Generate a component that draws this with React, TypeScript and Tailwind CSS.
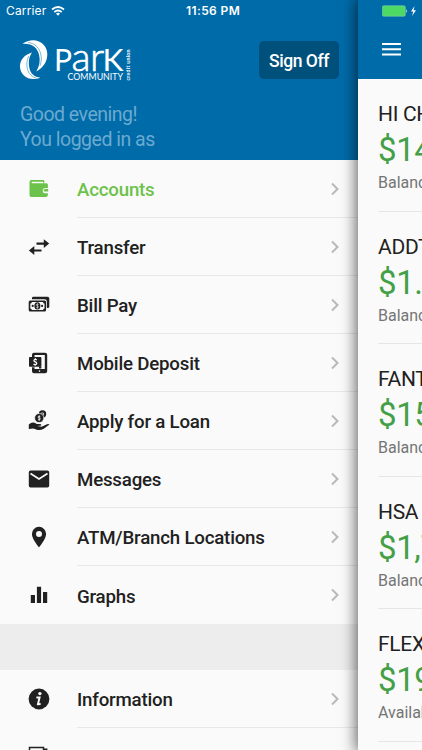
import type { ReactNode } from "react";

interface MenuItem {
  label: string;
  icon: ReactNode;
  active?: boolean;
}

interface Account {
  name: string;
  amount: string;
  caption: string;
}

const WalletIcon = () => (
  <svg width="20" height="20" viewBox="0 0 20 20" fill="currentColor">
    <path d="M2.500 1h12a.8.8 0 0 1 .8.8V3.800h-1.300V2.700H3.500q-1 0-1 .7t1 .8h13.800q1.600 0 1.600 1.500v3.300h-2.500a2.500 2.500 0 0 0 0 5.300h2.500v1.800q0 1.800-1.800 1.800H2.300Q.5 17.900.5 16V3q0-2 2-2z" />
    <path d="M16 10h3.200v2.500H16a1.200 1.200 0 0 1 0-2.500z" />
  </svg>
);

const TransferIcon = () => (
  <svg width="22" height="20" viewBox="0 0 22 20" fill="currentColor">
    <path d="M8.500 5.600h7.300V2.200l5.400 4.400-5.400 4.400V7.800H8.500zM13.500 12.400H6.300V9.100L.9 13.500l5.400 4.400v-3.300h7.200z" />
  </svg>
);

const BillIcon = () => (
  <svg width="22" height="20" viewBox="0 0 22 20" fill="currentColor">
    <path d="M5 1.700h14.500q1.800 0 1.800 1.800v7.900q0 1.600-1.600 1.600h-.8V6.400q0-2.200-2.500-2.200H4q-.6-2.500 1-2.500z" />
    <path
      fillRule="evenodd"
      d="M2.200 5.400h14.400q1.500 0 1.500 1.500v8.100q0 1.500-1.500 1.500H2.200Q.7 16.500.7 15V6.900q0-1.500 1.500-1.500zm1.600 1.500q0 1.500-1.500 1.500v5.100q1.500 0 1.500 1.500H15q0-1.500 1.500-1.500V8.400Q15 8.400 15 6.900z"
    />
    <ellipse cx="9.400" cy="10.950" rx="3" ry="3.600" />
    <circle cx="4.700" cy="10.950" r="1.100" />
    <circle cx="14.100" cy="10.950" r="1.100" />
    <path d="M10.500 9.500Q9.400 8.800 8.600 9.500t.8 1.400 .8 1.500-1.900.1M9.400 8.300v5.300" stroke="#fafafa" strokeWidth=".6" fill="none" />
  </svg>
);

const MobileIcon = () => (
  <svg width="22" height="22" viewBox="0 0 22 22" fill="currentColor">
    <path
      fillRule="evenodd"
      d="M6 .7h11q2.200 0 2.200 2v16.500q0 2-2.200 2H6q-2 0-2-2v-4h2.500v1.800h10.300V3H6.500v2H4V2.700q0-2 2-2zM11.500 18.300a.8.8 0 1 0 0 1.600.8.8 0 0 0 0-1.600z"
    />
    <rect x="1" y="5" width="12.400" height="9.800" rx=".8" />
    <path d="M11 14.500h2.400v2H11z" />
    <path d="M8.900 7.900Q7.200 6.700 6.200 7.800t1.100 2.100 1.200 2.100-3 .1" stroke="#fafafa" strokeWidth="1.200" fill="none" />
    <path d="M7.300 6v1.200M7.300 12.400v1.300" stroke="#fafafa" strokeWidth="1" />
  </svg>
);

const LoanIcon = () => (
  <svg width="22" height="22" viewBox="0 0 22 22" fill="currentColor">
    <path d="M.8 14.400q2.800-2.600 5.800-1.700l2.300 1.300h3.300q1.500.2 1.100 1.500l-3.900.6 4.100.6 5.500-2.500q1.800-.5 2.500.3l-5.700 4.300q-3.400 1.900-7 1l-3.400-1.300-4.600.4z" />
    <circle cx="14.500" cy="4" r="3.700" />
    <circle cx="11.200" cy="8" r="4.600" stroke="#fafafa" strokeWidth=".7" />
    <path d="M12.400 6.800Q11.100 5.800 10.200 6.700t1 1.300 .8 1.500-2-.1M11.200 5.300v5.400M13.300 3l2.200.1-.1 2.100" stroke="#fafafa" strokeWidth=".8" fill="none" />
  </svg>
);

const MailIcon = () => (
  <svg width="22" height="20" viewBox="0 0 22 20" fill="currentColor">
    <path d="M2.600 1.500h16.800q1.800 0 1.800 1.800v13.400q0 1.800-1.800 1.800H2.600Q.8 18.500.8 16.700V3.300q0-1.800 1.800-1.800z" />
    <path d="M2.500 4.600 11 9.900l8.500-5.300" stroke="#fafafa" strokeWidth="1.800" fill="none" />
  </svg>
);

const PinIcon = () => (
  <svg width="22" height="22" viewBox="0 0 22 22" fill="currentColor">
    <path
      fillRule="evenodd"
      d="M11 .8a7.100 7.100 0 0 0-7.100 7.100C3.900 13 11 21.200 11 21.200S18.100 13 18.100 7.900A7.100 7.100 0 0 0 11 .8zm0 4.100a3 3 0 1 1 0 6 3 3 0 0 1 0-6z"
    />
  </svg>
);

const GraphIcon = () => (
  <svg width="22" height="20" viewBox="0 0 22 20" fill="currentColor">
    <path d="M2.800 10h4.200v8H2.800zM8.900 1.700h4.200V18H8.900zM15 6.900h4.200V18H15z" />
  </svg>
);

const InfoIcon = () => (
  <svg width="22" height="22" viewBox="0 0 22 22" fill="currentColor">
    <circle cx="11" cy="11" r="10.400" />
    <circle cx="11.900" cy="5.600" r="1.700" fill="#fafafa" />
    <path d="M8.400 9.500h3.200L9.900 16.300q1.400.3 2.700-.8" stroke="#fafafa" strokeWidth="1.900" fill="none" />
  </svg>
);

const DocumentIcon = () => (
  <svg width="22" height="22" viewBox="0 0 22 22" fill="none" stroke="currentColor" strokeWidth="1.500">
    <path d="M1.500 20V1.500h14V20M15.500 3.300h3.200V20" />
  </svg>
);

const Logo = () => (
  <svg
    className="overflow-visible"
    width="114"
    height="44"
    viewBox="0 0 114 44"
    fill="#fff"
    fontFamily="Lato, sans-serif"
  >
    {/* upper and lower crescents */}
    <path d="M2.500 4.800C6 2.200 10 1 14 1.200 22 1.700 27.300 8 27.300 15c0 8-4 13.500-11 17.500 3.300-5.500 4.200-11 2.700-17C17.300 8.500 12 4 2.500 4.800z" />
    <path d="M12 13.500C4.500 15.500-.3 21 0 28c.5 8.500 9 15 20.500 10.800C14 38 10.300 34.500 9.300 28.500c-.9-5.300-.6-10 2.700-15z" />
    <path
      d="M8 3.500c6 .6 10.700 4.500 12.500 10.500 1.300 4.500 1 9-.6 13M8.800 17C6.600 21.500 6.300 26 7.500 30.500c1.400 4.700 4.600 7.700 9 8.900"
      fill="none"
      stroke="#006ba9"
      strokeWidth=".5"
    />
    <text x="34" y="32" fontSize="30" textLength="18" lengthAdjust="spacingAndGlyphs">P</text>
    <text x="51.500" y="32" fontSize="40" fontWeight="300" stroke="#fff" strokeWidth=".7" textLength="19" lengthAdjust="spacingAndGlyphs">a</text>
    <text x="70" y="32" fontSize="40" fontWeight="300" stroke="#fff" strokeWidth=".7">r</text>
    <text x="82.500" y="32" fontSize="30" textLength="21" lengthAdjust="spacingAndGlyphs">K</text>
    <text x="47.500" y="41.300" fontSize="9.600" textLength="55.500" lengthAdjust="spacingAndGlyphs">COMMUNITY</text>
    <text transform="translate(109.500 41.500) rotate(-90)" fontSize="5.200" fontWeight="700" textLength="31">credit union</text>
  </svg>
);

const mainItems: MenuItem[] = [
  { label: "Accounts", icon: <WalletIcon />, active: true },
  { label: "Transfer", icon: <TransferIcon /> },
  { label: "Bill Pay", icon: <BillIcon /> },
  { label: "Mobile Deposit", icon: <MobileIcon /> },
  { label: "Apply for a Loan", icon: <LoanIcon /> },
  { label: "Messages", icon: <MailIcon /> },
  { label: "ATM/Branch Locations", icon: <PinIcon /> },
  { label: "Graphs", icon: <GraphIcon /> },
];

const moreItems: MenuItem[] = [
  { label: "Information", icon: <InfoIcon /> },
  { label: "", icon: <DocumentIcon /> },
];

const accounts: Account[] = [
  { name: "HI CH", amount: "$14", caption: "Balance" },
  { name: "ADDT", amount: "$1.", caption: "Balance" },
  { name: "FANT", amount: "$15", caption: "Balance" },
  { name: "HSA", amount: "$1,7", caption: "Balance" },
  { name: "FLEX", amount: "$19", caption: "Available" },
];

const MenuList = ({ items }: { items: MenuItem[] }) => (
  <ul>
    {items.map((item, index) => (
      <li
        key={index}
        className={`flex h-[58px] ${item.active ? "text-[#6cc24a]" : "text-[#212121]"}`}
      >
        <div className="flex w-[77px] shrink-0 items-center justify-center">{item.icon}</div>
        <div
          className={`flex flex-1 items-center justify-between pr-[18px] ${
            index < items.length - 1 ? "border-b border-[#e8e8e8]" : ""
          }`}
        >
          <span className="pt-[4px] text-[18.700px] font-medium tracking-[-0.2px] whitespace-nowrap">
            {item.label}
          </span>
          <svg width="10" height="14" viewBox="0 0 10 14" fill="none" stroke="#b9b9b9" strokeWidth="2">
            <path d="M2 1.500 7.500 7 2 12.500" />
          </svg>
        </div>
      </li>
    ))}
  </ul>
);

const App = () => {
  return (
    <div className="flex h-[750px] w-[422px] overflow-hidden bg-[#fafafa] font-[Roboto,sans-serif]">
      <aside className="w-[358px] shrink-0">
        <header className="h-[160px] bg-[#006ba9]">
          <div className="flex h-[22px] items-center font-[Inter,sans-serif] text-[12px] text-white">
            <span className="w-[44px] pl-[6px] tracking-[0.15px]">Carrier</span>
            <svg className="ml-[7px]" width="14" height="10" viewBox="0 0 14 10" fill="none" stroke="#fff" strokeWidth="1.700">
              <path d="M1 3.500q6-5 12 0M3.300 6q3.700-3 7.400 0" />
              <path d="M5 7.600q2-1.500 4 0L7 9.700z" fill="#fff" stroke="none" />
            </svg>
            <span className="ml-[121px] font-semibold tracking-[0.4px] whitespace-nowrap">11:56 PM</span>
          </div>
          <div className="flex items-start justify-between pt-[17px] pr-[19px] pl-5">
            <Logo />
            <button className="mt-[2px] h-[38px] w-[80px] rounded-[5px] bg-[#00507c] pt-[2px] text-[17.500px] font-medium tracking-[-0.45px] text-white">
              Sign Off
            </button>
          </div>
          <p className="pt-[20px] pl-5 text-[19.500px] leading-[24.500px] tracking-[-0.5px] text-[#6baad0]">
            Good evening!
            <br />
            You logged in as
          </p>
        </header>
        <MenuList items={mainItems} />
        <div className="h-[46px] bg-[#ededed]" />
        <MenuList items={moreItems} />
      </aside>

      <main className="z-10 w-[64px] shrink-0 bg-[#fafafa] shadow-[0_0_14px_2px_rgba(0,0,0,0.6)]">
        <header className="h-[79px] bg-[#006ba9]">
          <div className="flex h-[22px] items-center pl-6">
            <svg width="36" height="12" viewBox="0 0 36 12">
              <rect x=".3" y=".8" width="23" height="10.400" rx="1.500" fill="#4cd964" stroke="#8ccbb0" strokeWidth=".6" />
              <path d="M24.200 4.200q2 1.800 0 3.600z" fill="#b4dbc9" />
              <path d="M32.500 1 29 6.500h2.300L30 11l4-5.800h-2.400z" fill="#fff" />
            </svg>
          </div>
          <svg className="mt-[21px] ml-[24px]" width="19" height="13" viewBox="0 0 19 13" fill="#fff">
            <path d="M0 0h19v2H0zM0 5.300h19v2H0zM0 10.600h19v2H0z" />
          </svg>
        </header>
        <ul className="pl-5 whitespace-nowrap">
          {accounts.map((account) => (
            <li key={account.name} className="h-[132.600px] border-b border-[#e6e6e6] pt-[22px]">
              <h2 className="text-[21px] leading-[26px] tracking-[-0.3px] text-[#212121]">{account.name}</h2>
              <p className="text-[33px] leading-[46px] tracking-[-0.4px] text-[#43a047]">{account.amount}</p>
              <p className="text-[16px] leading-[20px] text-[#757575]">{account.caption}</p>
            </li>
          ))}
        </ul>
      </main>
    </div>
  );
};

export default App;
